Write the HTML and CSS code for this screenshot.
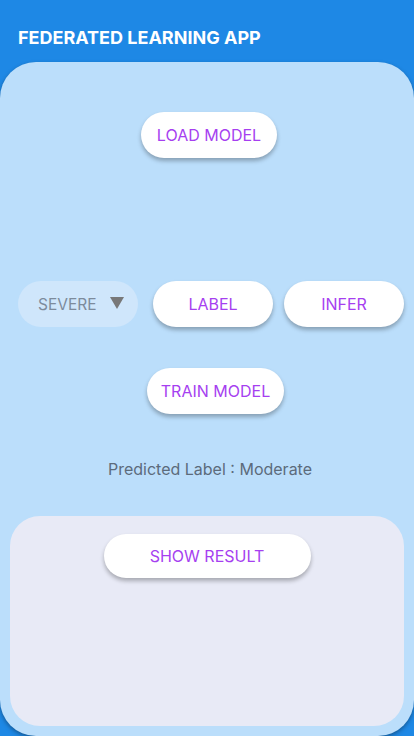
FILE: index.html
```html
<!DOCTYPE html>
<html>
<head>
<meta charset="utf-8">
<link rel="stylesheet" href="styles.css">
</head>
<body>
<header class="appbar"><h1 class="title">FEDERATED LEARNING APP</h1></header>
<main class="panel">
  <div class="center-row top"><button class="btn load">LOAD MODEL</button></div>
  <div class="action-row">
    <div class="dropdown"><span class="dd-text">SEVERE</span><span class="dd-arrow"></span></div>
    <button class="btn small label">LABEL</button>
    <button class="btn small infer">INFER</button>
  </div>
  <div class="center-row train-row"><button class="btn train">TRAIN MODEL</button></div>
  <p class="predicted">Predicted Label : Moderate</p>
  <section class="result-card">
    <button class="btn show">SHOW RESULT</button>
  </section>
</main>
</body>
</html>
```
FILE: styles.css
```css
html, body { margin: 0; padding: 0; }
body {
  width: 414px;
  height: 736px;
  overflow: hidden;
  background: #1e88e5;
  font-family: Inter, "Noto Sans", sans-serif;
}
.appbar {
  height: 62px;
  display: flex;
  align-items: flex-start;
  padding-left: 18px;
  box-sizing: border-box;
}
.title {
  margin: 0;
  padding-top: 28px;
  font-size: 18px;
  font-weight: 700;
  color: #ffffff;
  line-height: 20px;
  letter-spacing: 0;
}
.panel {
  background: #bbdefb;
  border-radius: 36px;
  height: 674px;
  box-sizing: border-box;
  padding-top: 50px;
  display: flex;
  flex-direction: column;
  box-shadow: 0 2px 4px rgba(0,0,0,0.35);
}
.center-row { display: flex; justify-content: center; }
.btn {
  border: none;
  background: #ffffff;
  border-radius: 23px;
  height: 46px;
  font-family: Inter, "Noto Sans", sans-serif;
  font-size: 16px;
  font-weight: 400;
  color: #a63ff0;
  box-shadow: 0 3px 4px rgba(0,0,0,0.28);
  padding: 0;
  cursor: pointer;
}
.load { width: 136px; margin-left: 4px; }
.action-row {
  display: flex;
  margin-top: 123px;
  padding-left: 18px;
}
.dropdown {
  width: 120px;
  height: 46px;
  border-radius: 23px;
  background: #cfe6fb;
  display: flex;
  align-items: center;
  box-sizing: border-box;
  padding-left: 20px;
}
.dd-text { color: #7d8b9c; font-size: 15.5px; font-weight: 400; width: 72px; }
.dd-arrow {
  width: 0; height: 0;
  border-left: 7px solid transparent;
  border-right: 7px solid transparent;
  border-top: 12px solid #787878;
  margin-top: -2px;
}
.small { width: 120px; }
.label { margin-left: 15px; }
.infer { margin-left: 11px; }
.train-row { margin-top: 41px; }
.train { width: 137px; margin-left: 17px; }
.predicted {
  margin: 45px 0 0 0;
  text-align: center;
  font-size: 16px;
  color: #5c6b7b;
  line-height: 20px;
  padding-left: 6px;
}
.result-card {
  margin: 37px 10px 0 10px;
  height: 210px;
  background: #e8eaf6;
  border-radius: 30px;
  display: flex;
  justify-content: center;
  align-items: flex-start;
  padding-top: 18px;
  box-sizing: border-box;
}
.show { width: 207px; height: 44px; border-radius: 22px; }
```
